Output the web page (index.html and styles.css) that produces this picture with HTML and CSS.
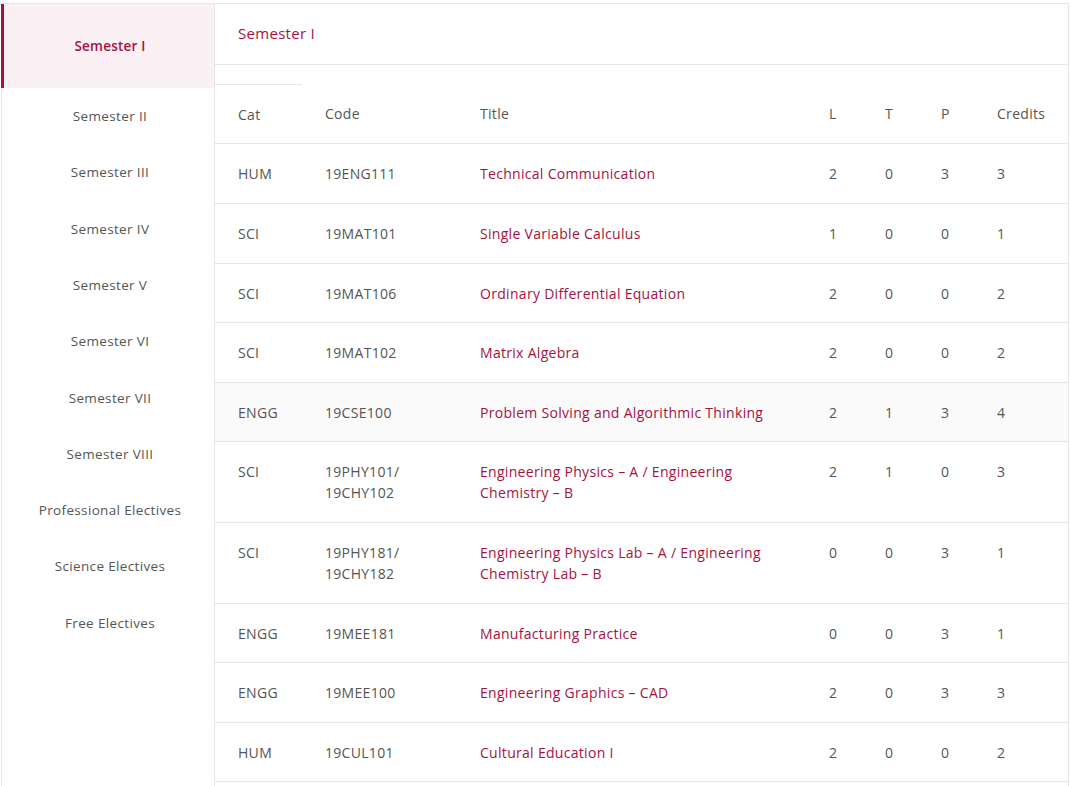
FILE: index.html
```html
<!DOCTYPE html>
<html>
<head>
<meta charset="utf-8">
<link rel="stylesheet" href="styles.css">
</head>
<body>
<div class="wrap">
  <nav class="side">
    <div class="tab active">Semester I</div>
    <div class="tab">Semester II</div>
    <div class="tab">Semester III</div>
    <div class="tab">Semester IV</div>
    <div class="tab">Semester V</div>
    <div class="tab">Semester VI</div>
    <div class="tab">Semester VII</div>
    <div class="tab">Semester VIII</div>
    <div class="tab">Professional Electives</div>
    <div class="tab">Science Electives</div>
    <div class="tab">Free Electives</div>
  </nav>
  <main class="panel">
    <div class="panel-head">Semester I</div>
    <table class="courses">
      <colgroup>
        <col class="c-cat"><col class="c-code"><col class="c-title"><col class="c-n"><col class="c-n"><col class="c-n"><col class="c-cr">
      </colgroup>
      <thead>
        <tr><th class="first">Cat</th><th>Code</th><th>Title</th><th>L</th><th>T</th><th>P</th><th>Credits</th></tr>
      </thead>
      <tbody>
        <tr><td>HUM</td><td>19ENG111</td><td class="t">Technical Communication</td><td>2</td><td>0</td><td>3</td><td>3</td></tr>
        <tr><td>SCI</td><td>19MAT101</td><td class="t">Single Variable Calculus</td><td>1</td><td>0</td><td>0</td><td>1</td></tr>
        <tr><td>SCI</td><td>19MAT106</td><td class="t">Ordinary Differential Equation</td><td>2</td><td>0</td><td>0</td><td>2</td></tr>
        <tr><td>SCI</td><td>19MAT102</td><td class="t">Matrix Algebra</td><td>2</td><td>0</td><td>0</td><td>2</td></tr>
        <tr class="hover"><td>ENGG</td><td>19CSE100</td><td class="t">Problem Solving and Algorithmic Thinking</td><td>2</td><td>1</td><td>3</td><td>4</td></tr>
        <tr><td>SCI</td><td>19PHY101/<br>19CHY102</td><td class="t">Engineering Physics – A / Engineering Chemistry – B</td><td>2</td><td>1</td><td>0</td><td>3</td></tr>
        <tr><td>SCI</td><td>19PHY181/<br>19CHY182</td><td class="t">Engineering Physics Lab – A / Engineering Chemistry Lab – B</td><td>0</td><td>0</td><td>3</td><td>1</td></tr>
        <tr><td>ENGG</td><td>19MEE181</td><td class="t">Manufacturing Practice</td><td>0</td><td>0</td><td>3</td><td>1</td></tr>
        <tr><td>ENGG</td><td>19MEE100</td><td class="t">Engineering Graphics – CAD</td><td>2</td><td>0</td><td>3</td><td>3</td></tr>
        <tr><td>HUM</td><td>19CUL101</td><td class="t">Cultural Education I</td><td>2</td><td>0</td><td>0</td><td>2</td></tr>
        <tr><td>&nbsp;</td><td></td><td></td><td></td><td></td><td></td><td></td></tr>
      </tbody>
    </table>
  </main>
</div>
</body>
</html>
```

FILE: styles.css
```css
* { box-sizing: border-box; }
html, body { margin: 0; padding: 0; background: #fff; }
body {
  font-family: "Open Sans", "Liberation Sans", sans-serif;
  font-size: 13.5px;
  color: #555;
  overflow: hidden;
  height: 786px;
}
.wrap {
  margin: 3px 0 0 1px;
  width: 1068px;
  border: 1px solid #e6e6e6;
  border-bottom: none;
  display: flex;
  min-height: 783px;
}
.side {
  width: 213px;
  flex: none;
  border-right: 1px solid #e6e6e6;
}
.tab {
  text-align: center;
  padding: 18.15px 6px 18.15px 10px;
  line-height: 20px;
  color: #555;
  letter-spacing: 0.35px;
}
.tab.active {
  padding: 32px 6px 32px 8px;
  background: #fbf0f3;
  color: #a4123f;
  border-left: 3px solid #a4123f;
  font-weight: 600;
  margin-left: -1px;
  letter-spacing: 0.2px;
}
.panel {
  flex: 1;
  min-width: 0;
}
.panel-head {
  height: 61px;
  padding: 0 23px;
  line-height: 59px;
  font-size: 15px;
  color: #a4123f;
  border-bottom: 1px solid #e6e6e6;
  letter-spacing: 0.3px;
}
.courses {
  margin-top: 19px;
  width: 100%;
  border-collapse: collapse;
  table-layout: fixed;
  font-size: 14px;
}
.c-cat { width: 87px; }
.c-code { width: 155px; }
.c-title { width: 349px; }
.c-n { width: 56px; }
.c-cr { width: auto; }
.courses th, .courses td {
  text-align: left;
  font-weight: normal;
  padding: 19px 10px 18.6px 23px;
  line-height: 21px;
  vertical-align: top;
  border-bottom: 1px solid #e6e6e6;
  letter-spacing: 0.3px;
}
.courses th { color: #555; padding-top: 18.9px; }
.courses th.first { border-top: 1px solid #e6e6e6; }
.courses td.t { color: #a4123f; }
.courses tr.hover td { background: #fafafa; }
```
